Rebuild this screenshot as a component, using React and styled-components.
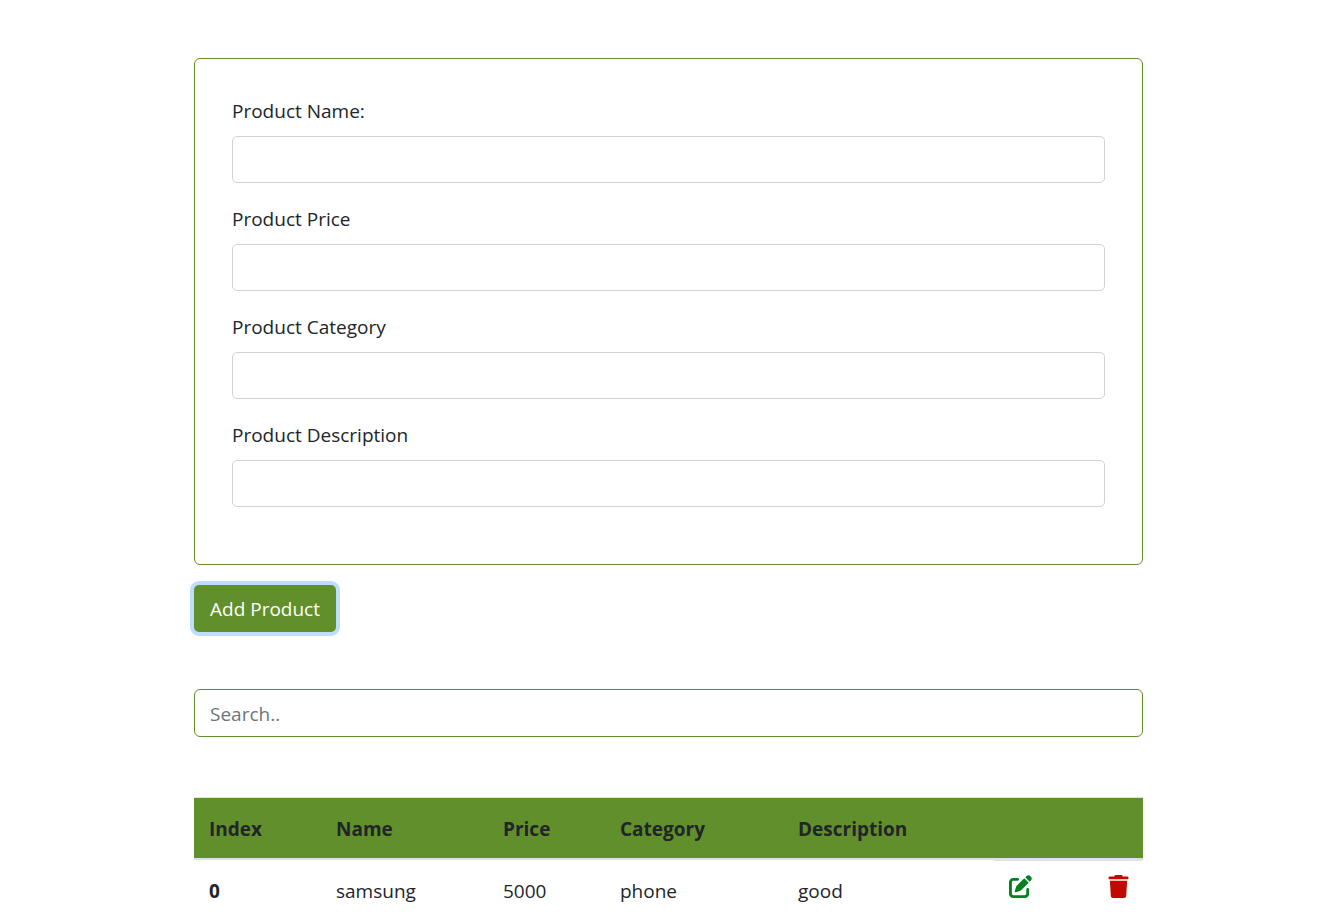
import React, { useState } from 'react';
import styled, { createGlobalStyle } from 'styled-components';
import { FaPenToSquare, FaTrash } from 'react-icons/fa6';

const GlobalStyle = createGlobalStyle`
  *, *::before, *::after { box-sizing: border-box; }
  body {
    margin: 0;
    background: #fff;
    color: #212529;
    font-family: "Segoe UI", "Open Sans", "Noto Sans", sans-serif;
    font-size: 19px;
    line-height: 30px;
  }
`;

const Page = styled.main`
  padding: 58px 180px 0 194px;
`;

const Card = styled.div`
  padding: 37px 37px 57px;
  border: 1px solid #618f2b;
  border-radius: 6px;
`;

const Fields = styled.div`
  display: grid;
  gap: 21px;
`;

const Field = styled.div`
  display: grid;
  gap: 10px;
`;

const TextInput = styled.input`
  display: block;
  width: 100%;
  height: ${(p) => (p.$accent ? '48px' : '47px')};
  padding: ${(p) => (p.$accent ? '9px 15px 7px' : '8px 15px')};
  border: 1px solid ${(p) => (p.$accent ? '#618f2b' : '#d2d2d2')};
  border-radius: ${(p) => (p.$accent ? '6px' : '5px')};
  background: #fff;
  color: #495057;
  font: inherit;
  outline: none;
  &::placeholder { color: #6c757d; opacity: 1; }
`;

const AddButton = styled.button`
  display: block;
  height: 47px;
  margin: 20px 0 57px;
  padding: 0 16px;
  border: 0;
  border-radius: 5px;
  background: #618f2b;
  color: #fff;
  font: inherit;
  box-shadow: 0 0 0 4px #bfdeff;
  cursor: pointer;
`;

const ProductTable = styled.table`
  width: 100%;
  margin-top: 60px;
  table-layout: fixed;
  border-collapse: separate;
  border-spacing: 0;
  text-align: left;
`;

const Column = styled.col`
  width: ${(p) => p.$width};
`;

const HeadCell = styled.th`
  height: 63px;
  padding: 2px 15px 0;
  border-top: 1px solid #dee2e6;
  border-bottom: 2px solid #dee2e6;
  background: #618f2b;
  font-weight: 700;
`;

const Cell = styled.td`
  padding: 16px 15px 15px;
  font-weight: ${(p) => (p.$bold ? 700 : 400)};
`;

const ActionCell = styled.td`
  padding: 14px 15px 15px;
  border-top: 1px solid #dee2e6;
  vertical-align: top;
`;

const IconButton = styled.button`
  display: block;
  padding: 0;
  border: 0;
  background: none;
  color: ${(p) => p.$color};
  font-size: 23px;
  line-height: 1;
  cursor: pointer;
  svg { display: block; }
`;

const fields = [
  { id: 'name', label: 'Product Name:' },
  { id: 'price', label: 'Product Price' },
  { id: 'category', label: 'Product Category' },
  { id: 'description', label: 'Product Description' },
];

const products = [
  { name: 'samsung', price: '5000', category: 'phone', description: 'good' },
];

const columns = ['127px', '167px', '117px', '178px', '211px', '98px', '51px'];

export default function App() {
  const [search, setSearch] = useState('');
  return (
    <>
      <GlobalStyle />
      <Page>
        <Card>
          <Fields>
            {fields.map((f) => (
              <Field key={f.id}>
                <label htmlFor={f.id}>{f.label}</label>
                <TextInput id={f.id} type="text" />
              </Field>
            ))}
          </Fields>
        </Card>
        <AddButton type="button">Add Product</AddButton>
        <TextInput
          $accent
          type="text"
          aria-label="Search"
          placeholder="Search.."
          value={search}
          onChange={(e) => setSearch(e.target.value)}
        />
        <ProductTable>
          <colgroup>
            {columns.map((w, i) => <Column key={i} $width={w} />)}
          </colgroup>
          <thead>
            <tr>
              <HeadCell>Index</HeadCell>
              <HeadCell>Name</HeadCell>
              <HeadCell>Price</HeadCell>
              <HeadCell>Category</HeadCell>
              <HeadCell>Description</HeadCell>
              <HeadCell />
              <HeadCell />
            </tr>
          </thead>
          <tbody>
            {products.map((p, i) => (
              <tr key={p.name}>
                <Cell as="th" scope="row" $bold>{i}</Cell>
                <Cell>{p.name}</Cell>
                <Cell>{p.price}</Cell>
                <Cell>{p.category}</Cell>
                <Cell>{p.description}</Cell>
                <ActionCell>
                  <IconButton type="button" aria-label="Edit" $color="#008021"><FaPenToSquare /></IconButton>
                </ActionCell>
                <ActionCell>
                  <IconButton type="button" aria-label="Delete" $color="#c00a00"><FaTrash /></IconButton>
                </ActionCell>
              </tr>
            ))}
          </tbody>
        </ProductTable>
      </Page>
    </>
  );
}
